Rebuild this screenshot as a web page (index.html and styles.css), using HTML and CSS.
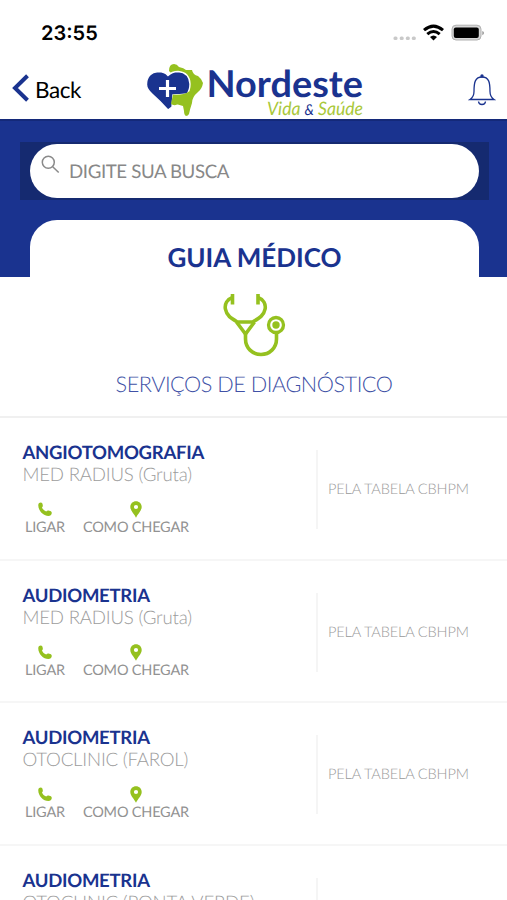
FILE: index.html
```html
<!DOCTYPE html>
<html lang="pt-BR">
<head>
    <meta charset="UTF-8">
    <meta name="viewport" content="width=device-width, initial-scale=1.0">
    <title>Guia Médico</title>
    <link rel="stylesheet" href="styles.css">
</head>
<body>
    <svg class="sprite" width="0" height="0">
        <symbol id="phone" viewBox="0 0 14 15">
            <path d="M.3 2.800C.4 1.300 1.600.5 2.800.5c1.100 0 1.600.8 1.900 2.200.3 1.400.1 2-.7 2.700.7 1.900 2.100 3.200 4.200 4.100.9-1 1.700-1.200 3-.8 1.900.5 2.700 1 2.600 2.400-.2 1.900-1.500 2.900-3.400 2.900C5.100 14-.1 8.200.3 2.800z"/>
        </symbol>
        <symbol id="pin" viewBox="0 0 12 17">
            <path fill-rule="evenodd" d="M6 .3C2.800.300.300 2.700.300 5.900c0 4 4.200 7.200 5.700 10.800 1.500-3.600 5.700-6.800 5.700-10.800C11.700 2.700 9.200.3 6 .3zm0 3.600a2.100 2.100 0 1 1 0 4.200 2.100 2.100 0 0 1 0-4.200z"/>
        </symbol>
    </svg>

    <div class="status-bar">
        <span class="time">23:55</span>
        <svg class="status-icons" width="92" height="20" viewBox="0 0 92 20">
            <g fill="#c9c9c9">
                <rect x="1.500" y="12.500" width="4" height="3.600" rx="1.500"/>
                <rect x="7.700" y="12.500" width="4" height="3.600" rx="1.500"/>
                <rect x="13.800" y="12.500" width="4" height="3.600" rx="1.500"/>
                <rect x="19.800" y="12.500" width="4" height="3.600" rx="1.500"/>
            </g>
            <g fill="none" stroke="#000" stroke-width="3">
                <path d="M32 6.200Q41.500-2 51 6.200"/>
                <path d="M35.300 10.200Q41.500 4.800 47.700 10.200"/>
            </g>
            <path d="M38 13Q41.500 10 45 13L41.500 16.500z"/>
            <rect x="60" y="1.200" width="29" height="14.800" rx="4" fill="#d8d8d8" stroke="#b0b0b0"/>
            <rect x="61.800" y="3.500" width="25" height="10.500" rx="2"/>
            <path d="M90.300 7v4.200q1.700-.6 1.700-2.100t-1.700-2.100z" fill="#999"/>
        </svg>
    </div>

    <header class="navbar">
        <a class="back" href="#">
            <svg width="18" height="30" viewBox="0 0 18 30"><path d="M15.500 2.800L3 15l12.500 12.200" fill="none" stroke="#1a338f" stroke-width="4"/></svg>
            <span>Back</span>
        </a>
        <svg class="logo" width="220" height="56" viewBox="0 0 220 56">
            <path fill="#95c11f" d="M23 8q0-7 5-7 3 0 5 3 5 1 7 3l6 0q1 5 6 6 3 2 5 7-1 6-5 9-6 5-6 11-2 6-3 11-1 2-3 2-2-1-2-5l-1-5q-4-1-6-2-4 1-6 0l4-27z"/>
            <path fill="#1a338f" stroke="#fff" stroke-width="1.400" d="M22 47Q14 38 6 31 .5 26 .5 21.500.7 9.500 12.500 8.500q6 0 9.500 4Q26 8.500 32 8.500q11.500 1 12 12.500 0 6-3 10-8 1-14 1-.5 6-1 12z"/>
            <path fill="#95c11f" d="M27 31.500q10 1 16-3l4 2-3 10-8 1.500q-3-1-5-.5-3 1.500-6-.5z"/>
            <path stroke="#fff" stroke-width="3.200" d="M21.500 17v17M13 25.500h17"/>
            <text class="logo-name" x="60.500" y="34" textLength="156.500" lengthAdjust="spacingAndGlyphs">Nordeste</text>
            <text class="logo-sub" x="121" y="52" textLength="96" lengthAdjust="spacingAndGlyphs">Vida <tspan class="logo-amp">&amp;</tspan> Saúde</text>
        </svg>
        <svg class="bell" width="28" height="34" viewBox="0 0 28 34">
            <g fill="none" stroke="#1a338f" stroke-width="1.300">
                <path d="M2 26.500h24c-3-2-4-4-4-8 0-9-1-14.500-8-14.500S6 9.500 6 18.500c0 4-1 6-4 8z"/>
                <path d="M10.500 28.500c.3 4 6.700 4 7 0"/>
            </g>
            <circle cx="14" cy="3" r="1.700" fill="#1a338f"/>
        </svg>
    </header>

    <section class="top">
        <div class="search">
            <div class="search-box">
                <svg width="19" height="19" viewBox="0 0 19 19" fill="none" stroke="#8a8a8a" stroke-width="1.500"><circle cx="7.300" cy="7.300" r="6"/><path d="M11.700 11.700l6 5.800"/></svg>
                <span>DIGITE SUA BUSCA</span>
            </div>
        </div>
        <h1 class="tab"><span>GUIA MÉDICO</span></h1>
    </section>

    <section class="category">
        <svg width="64" height="64" viewBox="0 0 64 64" fill="none" stroke="#95c11f" stroke-width="3.600">
            <path d="M10.500 1v10.500M36 1v10.500"/>
            <path d="M10.500 4.500C5 6.500 2.500 11 3.400 16c1.300 7 6 9.500 12.100 13h15c6.100-3.500 11.300-6 12.600-13 .9-5-1.600-9.500-7.100-11.500"/>
            <path d="M14.500 29l9 12 9-12"/>
            <path d="M23.500 40v6c0 9 7 15.500 15.500 15.500S54.500 55 54.500 46v-5"/>
            <circle cx="54" cy="32" r="7.500" stroke-width="3.300"/>
            <circle cx="54" cy="32" r="3.700" fill="#95c11f" stroke="none"/>
        </svg>
        <h2>SERVIÇOS DE DIAGNÓSTICO</h2>
    </section>

    <ul class="list">
        <li class="item">
            <div class="info">
                <h3>ANGIOTOMOGRAFIA</h3>
                <p>MED RADIUS (Gruta)</p>
                <div class="actions">
                    <a href="#"><svg class="phone"><use href="#phone"/></svg>LIGAR</a>
                    <a href="#"><svg class="pin"><use href="#pin"/></svg>COMO CHEGAR</a>
                </div>
            </div>
            <div class="price">PELA TABELA CBHPM</div>
        </li>
        <li class="item">
            <div class="info">
                <h3>AUDIOMETRIA</h3>
                <p>MED RADIUS (Gruta)</p>
                <div class="actions">
                    <a href="#"><svg class="phone"><use href="#phone"/></svg>LIGAR</a>
                    <a href="#"><svg class="pin"><use href="#pin"/></svg>COMO CHEGAR</a>
                </div>
            </div>
            <div class="price">PELA TABELA CBHPM</div>
        </li>
        <li class="item">
            <div class="info">
                <h3>AUDIOMETRIA</h3>
                <p>OTOCLINIC (FAROL)</p>
                <div class="actions">
                    <a href="#"><svg class="phone"><use href="#phone"/></svg>LIGAR</a>
                    <a href="#"><svg class="pin"><use href="#pin"/></svg>COMO CHEGAR</a>
                </div>
            </div>
            <div class="price">PELA TABELA CBHPM</div>
        </li>
        <li class="item">
            <div class="info">
                <h3>AUDIOMETRIA</h3>
                <p>OTOCLINIC (PONTA VERDE)</p>
            </div>
            <div class="price"></div>
        </li>
    </ul>
</body>
</html>
```
FILE: styles.css
```css
* {
    margin: 0;
    padding: 0;
    box-sizing: border-box;
}

body {
    width: 507px;
    height: 900px;
    overflow: hidden;
    background: #fff;
    font-family: Lato, 'Liberation Sans', sans-serif;
    text-rendering: geometricPrecision;
}

svg {
    display: block;
    flex-shrink: 0;
}

a {
    color: inherit;
    text-decoration: none;
}

.sprite {
    display: none;
}

.status-bar {
    display: flex;
    justify-content: space-between;
    height: 63px;
    padding: 20px 23px 0 41px;
}

.time {
    font-family: Inter, sans-serif;
    font-size: 20px;
    line-height: 26px;
    font-weight: 600;
}

.status-icons {
    margin-top: 4px;
}

.navbar {
    display: flex;
    height: 56px;
    padding-left: 12px;
}

.back {
    display: flex;
    width: 134px;
    height: 30px;
    margin-top: 10px;
    gap: 5px;
    font-size: 22.5px;
    letter-spacing: -0.4px;
    line-height: 34px;
}

.logo-name {
    font-size: 37px;
    font-weight: 700;
    fill: #1a338f;
}

.logo-sub {
    font-size: 18.5px;
    font-style: italic;
    fill: #a9c83a;
}

.logo-amp {
    font-size: 15px;
    fill: #1a338f;
}

.bell {
    margin: 10px 0 0 102px;
}

.top {
    height: 158px;
    padding-top: 21px;
    background: #1a338f;
    border-top: 2px solid #142979;
}

.search {
    height: 58px;
    margin: 0 18px 0 20px;
    padding: 2px 10px;
    background: #152a70;
}

.search-box {
    display: flex;
    height: 54px;
    padding: 11px;
    gap: 9px;
    background: #fff;
    border-radius: 27px;
    color: #888;
    font-size: 18.7px;
    letter-spacing: -0.4px;
    line-height: 33px;
}

.tab {
    height: 57px;
    margin: 20px 28px 0 30px;
    background: #fff;
    border-radius: 27px 27px 0 0;
    color: #1a338f;
    font-size: 26px;
    font-weight: 700;
    line-height: 74px;
    text-align: center;
}

.category {
    display: flex;
    flex-direction: column;
    align-items: center;
    height: 141px;
    padding-top: 16px;
    border-bottom: 2px solid #f0f0f0;
}

.category h2 {
    margin-top: 11px;
    padding-left: 1px;
    color: #4051a6;
    font-size: 21.7px;
    letter-spacing: -0.47px;
    font-weight: 300;
    line-height: 32px;
}

.list {
    list-style: none;
}

.item {
    display: flex;
    height: 142.6px;
    padding: 22px 22px 0 22.5px;
    border-bottom: 2px solid #f6f6f6;
}

.info {
    width: 293.5px;
}

.info h3 {
    color: #1a338f;
    font-size: 18.5px;
    letter-spacing: -0.27px;
    font-weight: 700;
    line-height: 24px;
}

.info p {
    color: #9c9c9c;
    font-size: 18.7px;
    letter-spacing: -0.22px;
    font-weight: 300;
    line-height: 21px;
}

.actions {
    display: flex;
    gap: 18px;
    padding: 16px 0 0 2.5px;
    color: #929292;
    font-size: 14.5px;
    letter-spacing: -0.2px;
    line-height: 20px;
}

.actions a {
    display: flex;
    flex-direction: column;
    align-items: center;
}

.actions svg {
    width: 14px;
    height: 17px;
    fill: #95c11f;
}

.price {
    height: 79px;
    margin-top: 10px;
    padding-left: 10px;
    border-left: 2px solid #f5f5f5;
    color: #999;
    font-size: 14.6px;
    letter-spacing: -0.18px;
    font-weight: 300;
    line-height: 80px;
}
```
